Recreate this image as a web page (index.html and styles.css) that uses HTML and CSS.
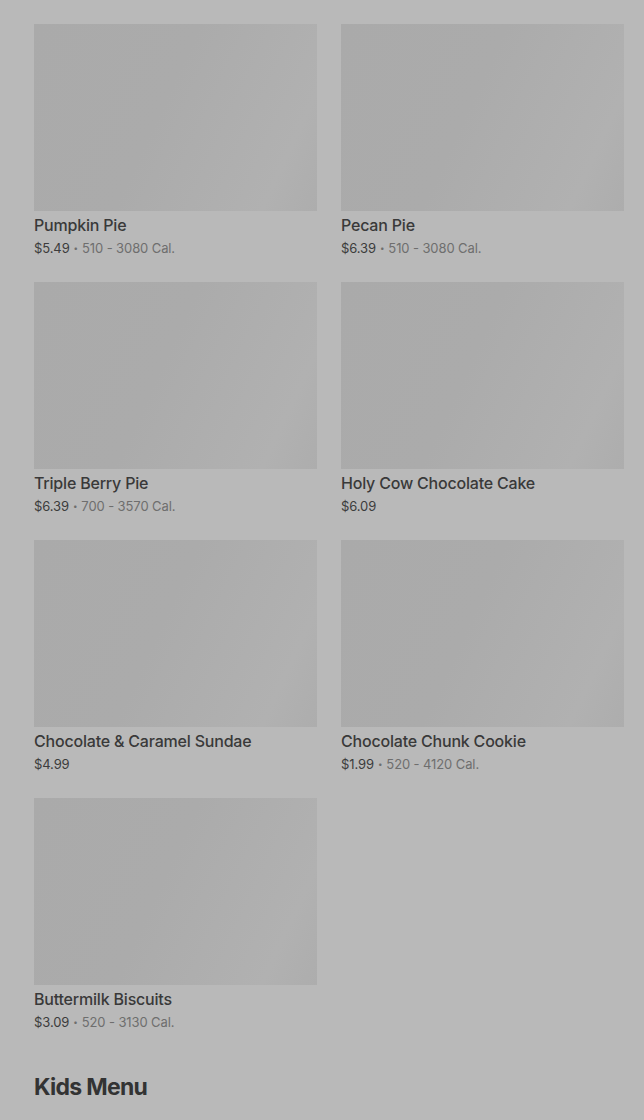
FILE: index.html
```html
<!DOCTYPE html>
<html>
<head>
<meta charset="utf-8">
<link rel="stylesheet" href="styles.css">
</head>
<body>
<main class="page">
  <div class="grid">
    <div class="card"><div class="thumb"></div><div class="title">Pumpkin Pie</div><div class="meta"><span class="price">$5.49</span><span class="dot">•</span><span class="cal">510 - 3080 Cal.</span></div></div>
    <div class="card"><div class="thumb"></div><div class="title">Pecan Pie</div><div class="meta"><span class="price">$6.39</span><span class="dot">•</span><span class="cal">510 - 3080 Cal.</span></div></div>
    <div class="card"><div class="thumb"></div><div class="title">Triple Berry Pie</div><div class="meta"><span class="price">$6.39</span><span class="dot">•</span><span class="cal">700 - 3570 Cal.</span></div></div>
    <div class="card"><div class="thumb"></div><div class="title">Holy Cow Chocolate Cake</div><div class="meta"><span class="price">$6.09</span></div></div>
    <div class="card"><div class="thumb"></div><div class="title">Chocolate &amp; Caramel Sundae</div><div class="meta"><span class="price">$4.99</span></div></div>
    <div class="card"><div class="thumb"></div><div class="title">Chocolate Chunk Cookie</div><div class="meta"><span class="price">$1.99</span><span class="dot">•</span><span class="cal">520 - 4120 Cal.</span></div></div>
    <div class="card"><div class="thumb"></div><div class="title">Buttermilk Biscuits</div><div class="meta"><span class="price">$3.09</span><span class="dot">•</span><span class="cal">520 - 3130 Cal.</span></div></div>
  </div>
  <h2 class="section">Kids Menu</h2>
</main>
</body>
</html>
```
FILE: styles.css
```css
html, body {
  margin: 0;
  padding: 0;
  background: #b9b9b9;
}
body {
  font-family: Inter, "Noto Sans", "Liberation Sans", sans-serif;
  color: #3a3a3a;
}
.page {
  padding: 24px 20px 0 34px;
}
.grid {
  display: grid;
  grid-template-columns: 283px 283px;
  column-gap: 24px;
  row-gap: 24px;
}
.card {
  display: flex;
  flex-direction: column;
}
.thumb {
  height: 187px;
  background: linear-gradient(115deg, #aaaaaa 0%, #ababab 45%, #b1b1b1 85%, #adadad 100%);
}
.title {
  margin-top: 4px;
  font-size: 16px;
  line-height: 20px;
  font-weight: 500;
  letter-spacing: -0.2px;
  color: #393939;
}
.meta {
  margin-top: 3px;
  font-size: 13px;
  line-height: 20px;
  letter-spacing: -0.1px;
  display: flex;
  align-items: center;
}
.price {
  color: #3c3c3c;
}
.dot {
  color: #6e6e6e;
  font-size: 8px;
  margin: 0 4px;
}
.cal {
  color: #6e6e6e;
}
.section {
  margin: 39px 0 0 0;
  font-size: 23px;
  line-height: 32px;
  font-weight: 700;
  letter-spacing: -0.7px;
  color: #333;
}
```
